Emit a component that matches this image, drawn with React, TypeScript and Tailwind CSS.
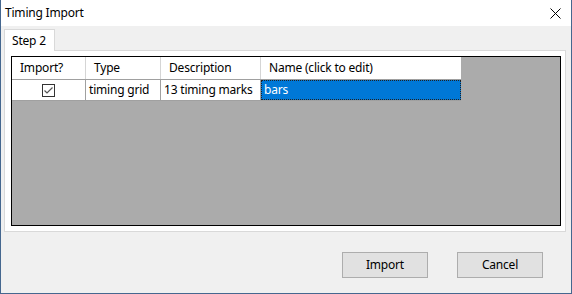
import React from "react";

const FONT = { fontFamily: '"Noto Sans", "Open Sans", sans-serif' };

function CloseIcon() {
  return (
    <svg width="11" height="11" viewBox="0 0 11 11" aria-hidden>
      <path d="M0.5 0.5 L10.5 10.5 M10.5 0.5 L0.5 10.5" stroke="#000" strokeWidth="1" />
    </svg>
  );
}

function CheckBox() {
  return (
    <span className="flex h-[13px] w-[13px] items-center justify-center border border-[#333] bg-white">
      <svg width="11" height="11" viewBox="0 0 11 11" aria-hidden>
        <path d="M1.5 5.5 L4 8 L9.5 2.5" fill="none" stroke="#555" strokeWidth="1.2" />
      </svg>
    </span>
  );
}

// column widths incl. right grid line
const COLS = ["w-[74px]", "w-[75px]", "w-[100px]", "w-[200px]"];

export default function App() {
  return (
    <div
      className="flex h-[294px] w-[572px] flex-col border-x border-b border-[#45678f] bg-[#f0f0f0] text-[12px] tracking-[-0.2px] text-black"
      style={FONT}
    >
      {/* title bar */}
      <div className="flex h-[26px] shrink-0 items-center justify-between bg-white pl-[4px] pr-[10px]">
        <span>Timing Import</span>
        <CloseIcon />
      </div>

      {/* tabs */}
      <div className="flex flex-col pl-[3px] pr-[5px] pt-[3px]">
        <div className="relative z-10 -mb-px flex h-[22px] w-[51px] items-center border-x border-t border-[#d9d9d9] bg-white pl-[7px]">
          Step 2
        </div>
        <div className="h-[182px] border border-[#d9d9d9] bg-white pb-[5px] pl-[6px] pr-[4px] pt-[5px]">
          {/* grid */}
          <div className="h-full border border-black bg-[#ababab]">
            <div className="flex h-[23px] w-[449px] border-b border-[#a0a0a0] bg-white">
              {["Import?", "Type", "Description", "Name (click to edit)"].map((h, i) => (
                <div
                  key={h}
                  className={`${COLS[i]} flex items-center border-r border-[#d5d5d5] pl-[8px] ${i === 3 ? "border-r-0" : ""}`}
                >
                  {h}
                </div>
              ))}
            </div>
            <div className="flex h-[21px] w-[449px] border-b border-[#a0a0a0] bg-white">
              <div className={`${COLS[0]} flex items-center justify-center border-r border-[#a0a0a0]`}>
                <CheckBox />
              </div>
              <div className={`${COLS[1]} flex items-center border-r border-[#a0a0a0] pl-[3px]`}>timing grid</div>
              <div className={`${COLS[2]} flex items-center border-r border-[#a0a0a0] pl-[3px]`}>13 timing marks</div>
              <div className={`${COLS[3]} flex items-center border border-dotted border-[#222] bg-[#0078d7] pl-[2px] text-white`}>
                bars
              </div>
            </div>
          </div>
        </div>
      </div>

      {/* buttons */}
      <div className="mt-[20px] flex justify-end gap-[29px] pr-[28px]">
        <button className="h-[26px] w-[86px] border border-[#adadad] bg-[#e1e1e1]">Import</button>
        <button className="h-[26px] w-[86px] border border-[#adadad] bg-[#e1e1e1]">Cancel</button>
      </div>
    </div>
  );
}
